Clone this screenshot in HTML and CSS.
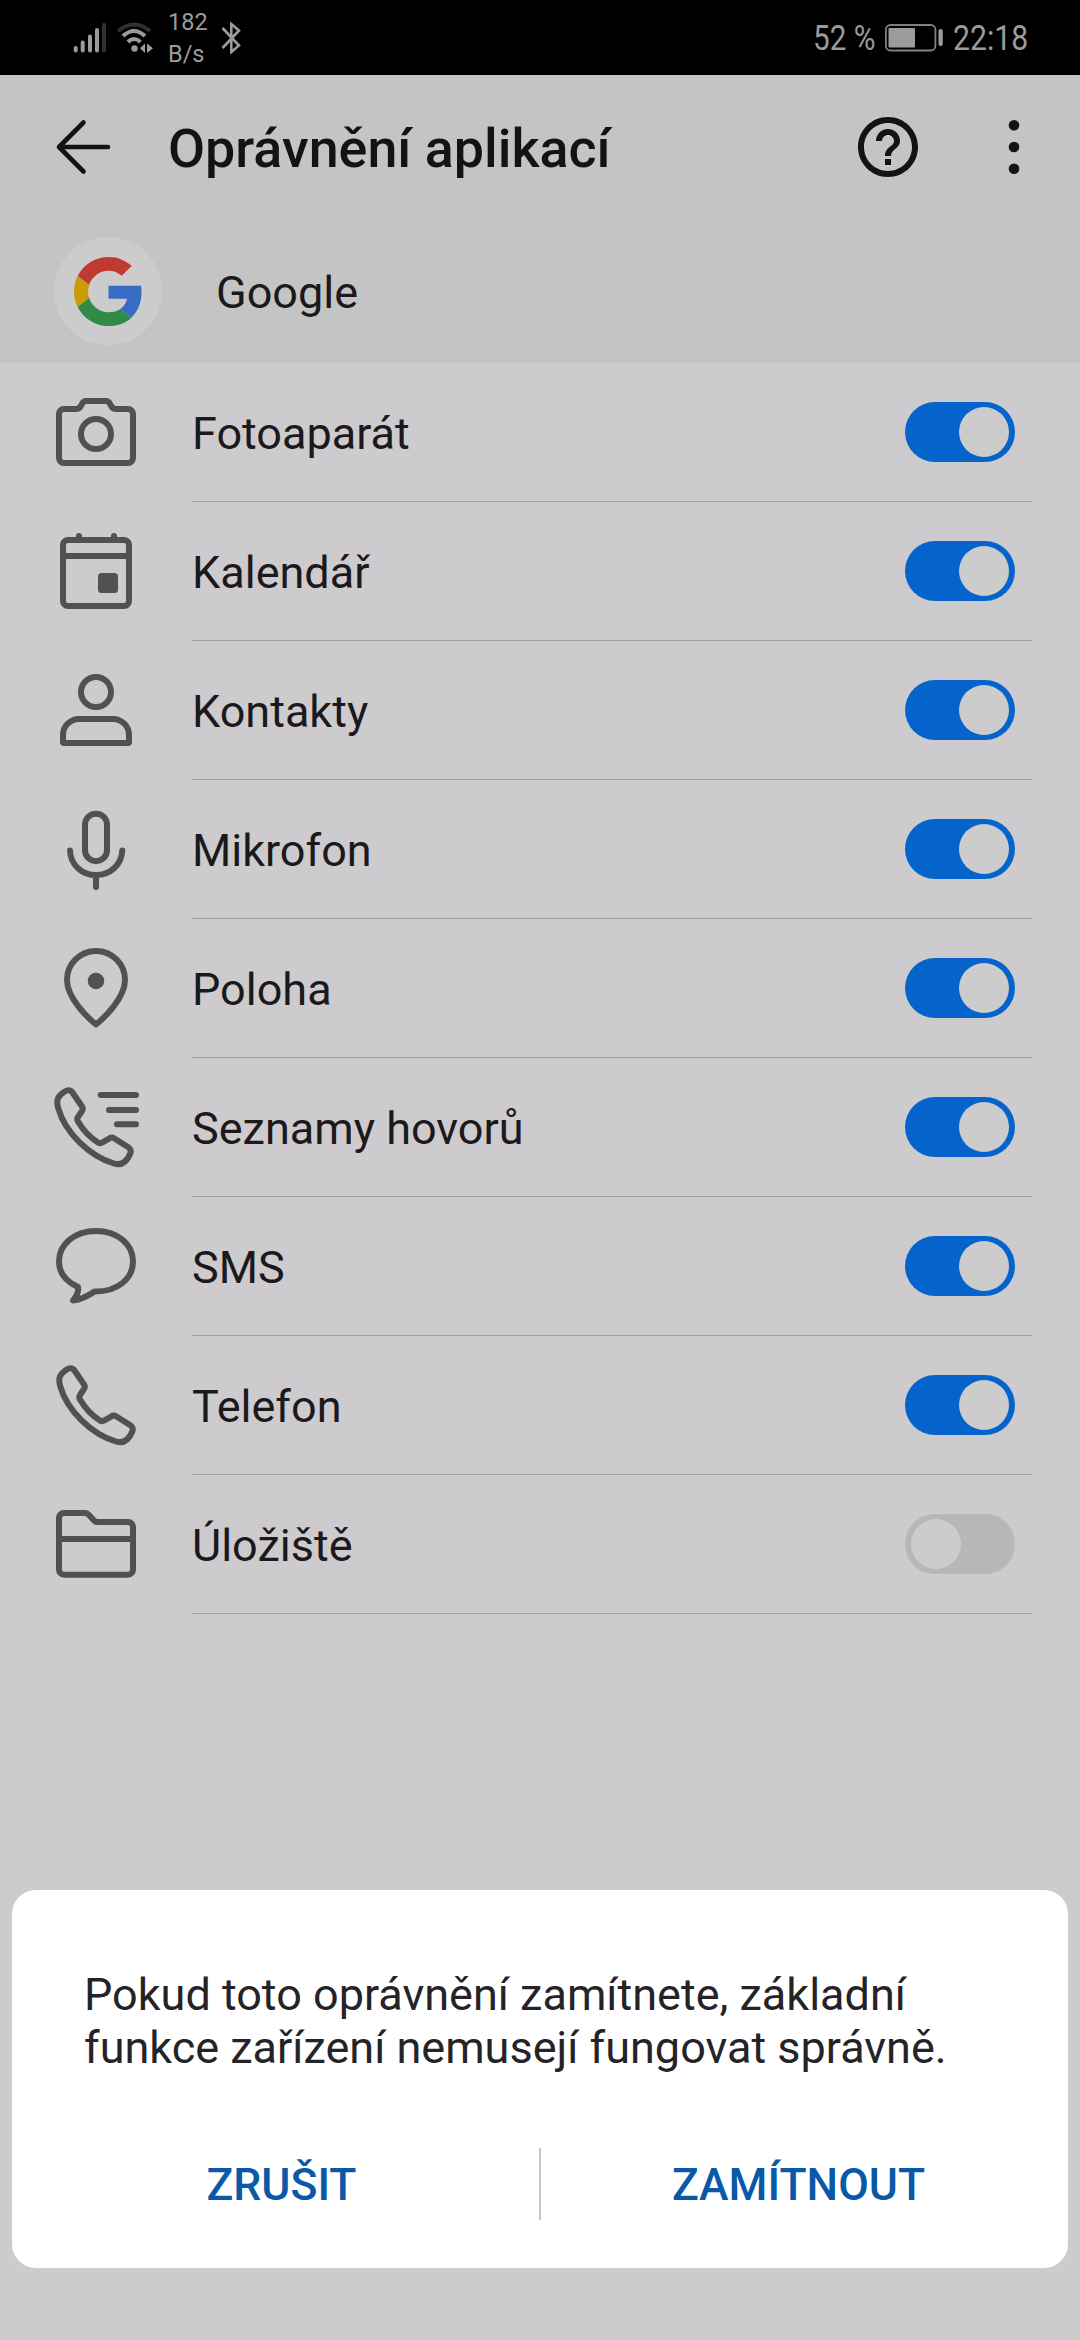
FILE: index.html
```html
<!DOCTYPE html>
<html lang="cs">
<head>
<meta charset="utf-8">
<title>Oprávnění aplikací</title>
<link rel="stylesheet" href="styles.css">
</head>
<body>
<div class="screen">
  <header class="status">
    <svg class="signal" viewBox="0 0 34 32" width="34" height="32">
      <g class="bars"><path d="M2.700 28.500V26"/><path d="M9.700 28.500V20.500"/><path d="M17 28.500V14.500"/><path d="M24 28.500V8"/><path class="faint" d="M31 28.500V3"/></g>
    </svg>
    <svg class="wifi" viewBox="0 0 38 32" width="38" height="32">
      <path class="faint" d="M2 9Q18 -4 34 9"/>
      <path d="M7 14Q18 4 29 14"/><path d="M12 20Q18 14 24.500 20"/>
      <circle cx="18.500" cy="26.500" r="3.200"/>
      <path class="solid" d="M29 21.500V31L24 26.300ZM31 21.500L37 26.300L31 31Z"/>
    </svg>
    <div class="rate"><span>182</span><span>B/s</span></div>
    <svg class="bluetooth" viewBox="0 0 20 32" width="20" height="32">
      <path d="M1.500 6L18 23.500L10.300 30V2L18 8.500L1.500 26"/>
    </svg>
    <div class="status-right">
      <span class="percent">52 %</span>
      <svg class="battery" viewBox="0 0 58 28" width="58" height="28">
        <rect class="case" x="0.900" y="1" width="49.500" height="25.500" rx="4.500"/>
        <rect x="3.500" y="4" width="26.500" height="19.500" rx="1"/>
        <rect x="53.500" y="5" width="4.300" height="17" rx="2"/>
      </svg>
      <span class="clock">22:18</span>
    </div>
  </header>

  <section class="top">
    <div class="toolbar">
      <svg class="back" viewBox="0 0 60 60" width="60" height="60"><path d="M29.500 5.500L5 30L29.500 54.500M5 30H54"/></svg>
      <h1>Oprávnění aplikací</h1>
      <svg class="help" viewBox="0 0 24 24" width="72" height="72"><path d="M11 18h2v-2h-2v2zm1-16C6.480 2 2 6.480 2 12s4.480 10 10 10 10-4.480 10-10S17.520 2 12 2zm0 18c-4.410 0-8-3.590-8-8s3.590-8 8-8 8 3.590 8 8-3.590 8-8 8zm0-14c-2.210 0-4 1.790-4 4h2c0-1.100.9-2 2-2s2 .9 2 2c0 2-3 1.750-3 5h2c0-2.250 3-2.500 3-5 0-2.210-1.790-4-4-4z"/></svg>
      <svg class="more" viewBox="0 0 12 60" width="12" height="60"><circle cx="6" cy="8.300" r="5.300"/><circle cx="6" cy="30" r="5.300"/><circle cx="6" cy="51.700" r="5.300"/></svg>
    </div>
    <div class="app">
      <div class="logo">
        <svg viewBox="0 0 48 48" width="72" height="72">
          <path fill="#bf3a2f" d="M24 9.500c3.540 0 6.710 1.220 9.210 3.600l6.850-6.850C35.900 2.380 30.470 0 24 0 14.620 0 6.510 5.380 2.560 13.220l7.980 6.190C12.430 13.720 17.740 9.500 24 9.500z"/>
          <path fill="#386bc4" d="M46.980 24.550c0-1.570-.15-3.090-.38-4.550H24v9.020h12.940c-.58 2.960-2.260 5.480-4.780 7.180l7.730 6c4.510-4.180 7.090-10.360 7.090-17.650z"/>
          <path fill="#cb9a07" d="M10.530 28.590c-.48-1.450-.76-2.990-.76-4.590s.27-3.140.76-4.590l-7.980-6.190C.92 16.460 0 20.120 0 24c0 3.880.92 7.540 2.560 10.780l7.970-6.190z"/>
          <path fill="#2f8b47" d="M24 48c6.480 0 11.930-2.130 15.890-5.810l-7.730-6c-2.150 1.450-4.920 2.300-8.160 2.300-6.260 0-11.570-4.220-13.470-9.910l-7.980 6.190C6.510 42.620 14.620 48 24 48z"/>
        </svg>
      </div>
      <span>Google</span>
    </div>
  </section>

  <ul class="list">
    <li>
      <svg viewBox="0 0 96 96"><path d="M16 25H28C30 25 31.500 24 32.500 22.500L34 20C35 18 36.500 17 38 17H58C59.500 17 61 18 62 20L63.500 22.500C64.500 24 66 25 68 25H80a5 5 0 0 1 5 5V74a5 5 0 0 1-5 5H16a5 5 0 0 1-5-5V30a5 5 0 0 1 5-5Z"/><circle cx="48" cy="50" r="15"/></svg>
      <div class="row"><span>Fotoaparát</span><i class="switch on"></i></div>
    </li>
    <li>
      <svg viewBox="0 0 96 96"><rect x="15" y="17" width="66" height="66" rx="5"/><path d="M15 33H81M31 13V17M66 13V17"/><rect class="solid" x="50" y="50" width="20" height="20" rx="3.500"/></svg>
      <div class="row"><span>Kalendář</span><i class="switch on"></i></div>
    </li>
    <li>
      <svg viewBox="0 0 96 96"><circle cx="48" cy="30" r="15"/><path d="M31 57H65A16 16 0 0 1 81 73V80Q81 81 80 81H16Q15 81 15 80V73A16 16 0 0 1 31 57Z"/></svg>
      <div class="row"><span>Kontakty</span><i class="switch on"></i></div>
    </li>
    <li>
      <svg viewBox="0 0 96 96"><rect x="37" y="12.700" width="22" height="47.500" rx="11"/><path d="M22 49.500C22.500 64 34 74 48 74S73.500 64 74.300 49.500M48 74V86"/></svg>
      <div class="row"><span>Mikrofon</span><i class="switch on"></i></div>
    </li>
    <li>
      <svg viewBox="0 0 96 96"><path d="M48 84.500C40 78 19 58 19 40A29 29 0 0 1 77 40C77 58 56 78 48 84.500Z"/><circle class="solid" cx="48" cy="41" r="8.300"/></svg>
      <div class="row"><span>Poloha</span><i class="switch on"></i></div>
    </li>
    <li>
      <svg viewBox="0 0 96 96"><path transform="translate(-2 0)" d="M18 13C21 10.500 24.500 10.500 26.500 13.500L36 27.500C37 29 37 30.500 36 32L32 38C31 39.500 31 41 32 42.500C37 51 44 58.500 52 63.500C53.500 64.500 55 64.300 56.500 63.300L63.500 59.300C65 58.300 66.500 58.300 68 59.300L82 68C84.500 69.500 85.500 72 84.300 74.500C81 82.500 76 87 68 84.500C43 77 19 53 12.500 30C9.500 21 12 17 18 13Z"/><path d="M52.700 16H88M61 31H88M69 45.300H88"/></svg>
      <div class="row"><span>Seznamy hovorů</span><i class="switch on"></i></div>
    </li>
    <li>
      <svg viewBox="0 0 96 96"><path d="M30 69C17 63 11 54 11 43.500C11 26 27 13 48 13S85 26 85 43.500S69 74 46.500 73.500C40 78 33 81.500 25 82.500C28 79 31 74 30 69Z"/></svg>
      <div class="row"><span>SMS</span><i class="switch on"></i></div>
    </li>
    <li>
      <svg viewBox="0 0 96 96"><path d="M18 13C21 10.500 24.500 10.500 26.500 13.500L36 27.500C37 29 37 30.500 36 32L32 38C31 39.500 31 41 32 42.500C37 51 44 58.500 52 63.500C53.500 64.500 55 64.300 56.500 63.300L63.500 59.300C65 58.300 66.500 58.300 68 59.300L82 68C84.500 69.500 85.500 72 84.300 74.500C81 82.500 76 87 68 84.500C43 77 19 53 12.500 30C9.500 21 12 17 18 13Z"/></svg>
      <div class="row"><span>Telefon</span><i class="switch on"></i></div>
    </li>
    <li>
      <svg viewBox="0 0 96 96"><path d="M16 17H37Q39 17 40.500 18.500L46 24.500Q47.300 26 49.500 26H80a5 5 0 0 1 5 5V73.700a5 5 0 0 1-5 5H16a5 5 0 0 1-5-5V22a5 5 0 0 1 5-5ZM11 43H85"/></svg>
      <div class="row"><span>Úložiště</span><i class="switch"></i></div>
    </li>
  </ul>

  <div class="dialog">
    <p>Pokud toto oprávnění zamítnete, základní<br>funkce zařízení nemusejí fungovat správně.</p>
    <div class="actions">
      <button>ZRUŠIT</button>
      <div class="separator"></div>
      <button>ZAMÍTNOUT</button>
    </div>
  </div>
</div>
</body>
</html>
```
FILE: styles.css
```css
* { box-sizing: border-box; }

body {
  margin: 0;
  background: #cdcbcd;
  font-family: Roboto, "Noto Sans", sans-serif;
  font-size: 45px;
  line-height: 53px;
  color: #1b191c;
}

svg { display: block; flex: none; }

.screen {
  width: 1080px;
  height: 2340px;
  display: flex;
  flex-direction: column;
  overflow: hidden;
}

/* Status bar */
.status {
  height: 75px;
  flex: none;
  background: #000;
  color: #9b9b9b;
  display: flex;
  align-items: center;
  padding: 0 53px 0 73px;
}
.signal, .wifi, .bluetooth { fill: none; stroke: #9b9b9b; }
.signal { stroke-width: 4; stroke-linecap: round; }
.status .faint { stroke: #303030; }
.wifi { stroke-width: 4; margin: 0 0 0 9px; }
.wifi circle, .wifi .solid { fill: #9b9b9b; stroke: none; }
.rate {
  width: 38px;
  margin-left: 14px;
  display: flex;
  flex-direction: column;
  font-size: 23.500px;
  line-height: 32px;
  white-space: nowrap;
}
.bluetooth { stroke-width: 2.600; margin-left: 15px; }
.status-right {
  margin-left: auto;
  display: flex;
  align-items: center;
  font-size: 34.500px;
}
.percent, .clock { padding-top: 2px; white-space: nowrap; transform-origin: left; }
.percent { width: 72px; transform: scaleX(.86); }
.clock { width: 74px; margin-left: 10px; transform: scaleX(.875); }
.battery { fill: #9b9b9b; }
.battery .case { fill: none; stroke: #808080; stroke-width: 1.800; }

/* Toolbar and app header */
.top {
  height: 288px;
  flex: none;
  background: #c5c4c5;
}
.toolbar {
  height: 144px;
  display: flex;
  align-items: center;
  padding: 0 60px 0 54px;
}
.back { fill: none; stroke: #131313; stroke-width: 4.600; stroke-linecap: round; stroke-linejoin: round; }
h1 {
  margin: 4px 0 0 54px;
  font-size: 53.800px;
  line-height: 62px;
  font-weight: 500;
  color: #131313;
  white-space: nowrap;
}
.help { margin-left: auto; margin-right: 84px; fill: #131313; }
.more { fill: #131313; }
.app {
  height: 144px;
  display: flex;
  align-items: center;
  padding-left: 54px;
  gap: 54px;
}
.app span { padding-top: 2px; }
.logo {
  width: 108px;
  height: 108px;
  border-radius: 50%;
  background: #cdcccd;
  display: grid;
  place-items: center;
}
.logo svg { width: 69px; height: 69px; }

/* Permission list */
.list { margin: 0; padding: 0; list-style: none; flex: 1; }
.list li {
  height: 139px;
  display: flex;
  align-items: center;
  padding: 0 48px;
}
.list svg {
  width: 96px;
  height: 96px;
  margin-bottom: 1px;
  fill: none;
  stroke: #525152;
  stroke-width: 6;
  stroke-linecap: round;
  stroke-linejoin: round;
}
.list .solid { fill: #525152; stroke: none; }
.row {
  flex: 1;
  height: 139px;
  margin-left: 48px;
  padding-right: 17px;
  border-bottom: 1px solid #a09ea1;
  display: flex;
  align-items: center;
  justify-content: space-between;
}
.row span { padding-top: 2px; }
.switch {
  width: 110px;
  height: 60px;
  border-radius: 30px;
  background: #b8b6b9;
  padding: 5px 6px;
  display: flex;
}
.switch::before {
  content: "";
  width: 50px;
  height: 50px;
  border-radius: 50%;
  background: #cdcccd;
}
.switch.on { background: #0464cb; justify-content: flex-end; }

/* Confirmation sheet */
.dialog {
  flex: none;
  height: 378px;
  margin: 0 12px 72px;
  border-radius: 24px;
  background: #fff;
  padding: 78px 12px 0;
  color: #252327;
}
.dialog p { margin: 0; padding-left: 60px; white-space: nowrap; }
.actions {
  margin-top: 74px;
  display: flex;
  align-items: center;
}
.actions button {
  flex: 1;
  height: 72px;
  border: 0;
  padding: 2px 0 0;
  background: none;
  font: 500 44.500px/53px Roboto, "Noto Sans", sans-serif;
  color: #0a59a8;
}
.separator { width: 2px; height: 72px; background: #c8c8ca; }
```
